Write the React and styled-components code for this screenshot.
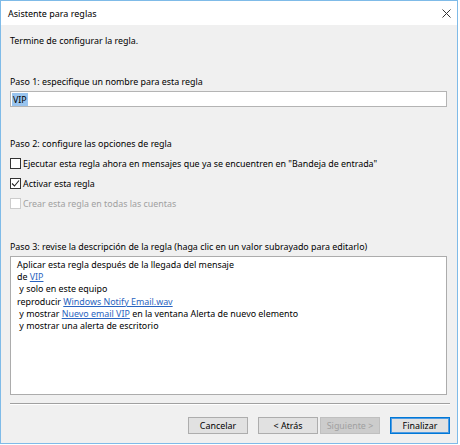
import React from "react";
import styled, { createGlobalStyle } from "styled-components";

const GlobalStyle = createGlobalStyle`
  body {
    margin: 0;
    background: #ffffff;
    font-family: "Noto Sans", "Open Sans", sans-serif;
    font-size: 8.9px;
    color: #000;
  }
`;

const Window = styled.div`
  box-sizing: border-box;
  width: 458px;
  height: 444px;
  border: 1px solid #7fbbe8;
  display: flex;
  flex-direction: column;
`;

const TitleBar = styled.div`
  height: 24px;
  background: #ffffff;
  display: flex;
  align-items: center;
  justify-content: space-between;
  padding: 0 6px 0 7px;
  font-size: 9px;
`;

const CloseButton = styled.button`
  border: 0;
  background: transparent;
  padding: 0;
  width: 10px;
  height: 10px;
  display: flex;
  align-items: center;
  justify-content: center;
  cursor: default;
`;

const Body = styled.div`
  flex: 1;
  background: #f0f0f0;
  padding: 0 7px 0 9px;
  display: flex;
  flex-direction: column;
`;

const Label = styled.div`
  line-height: 14px;
  margin-top: ${({ $top }) => $top || 0}px;
  white-space: nowrap;
`;

const NameInput = styled.div`
  box-sizing: border-box;
  margin: 2px 3px 0 0;
  height: 16px;
  background: #ffffff;
  border: 1px solid #b4b4b4;
  display: flex;
  align-items: center;
  padding-left: 1px;
`;

const Selected = styled.span`
  background: #99c4ee;
  line-height: 13px;
  padding: 0 1px;
`;

const Options = styled.div`
  margin-top: 2px;
  display: flex;
  flex-direction: column;
`;

const Option = styled.label`
  height: 20px;
  display: flex;
  align-items: center;
  gap: 2px;
  color: ${({ $disabled }) => ($disabled ? "#a0a0a0" : "#000")};
  white-space: nowrap;
`;

const Box = styled.span`
  box-sizing: border-box;
  width: 11px;
  height: 11px;
  background: #ffffff;
  border: 1px solid ${({ $disabled }) => ($disabled ? "#cccccc" : "#333333")};
  display: flex;
  align-items: center;
  justify-content: center;
`;

const Description = styled.div`
  box-sizing: border-box;
  margin: 2px 3px 0 0;
  height: 139px;
  background: #ffffff;
  border: 1px solid #acacac;
  padding: 2px 6px;
`;

const DescLine = styled.div`
  height: 12.2px;
  line-height: 12.2px;
  white-space: pre;
`;

const Link = styled.a`
  color: #2a64c0;
  text-decoration: underline;
  cursor: pointer;
`;

const Separator = styled.div`
  margin-top: 8px;
  height: 1px;
  background: #a0a0a0;
  border-bottom: 1px solid #ffffff;
`;

const ButtonRow = styled.div`
  margin-top: 12px;
  display: flex;
  justify-content: flex-end;
`;

const Button = styled.button`
  box-sizing: border-box;
  width: 60px;
  height: 17px;
  margin-left: ${({ $gap }) => $gap || 0}px;
  padding: 0;
  font: inherit;
  font-size: 8.9px;
  background: ${({ disabled }) => (disabled ? "#cccccc" : "#e1e1e1")};
  color: ${({ disabled }) => (disabled ? "#a0a0a0" : "#000")};
  border: 1px solid
    ${({ disabled, $primary }) =>
      $primary ? "#0078d7" : disabled ? "#bfbfbf" : "#adadad"};
  box-shadow: ${({ $primary }) => ($primary ? "inset 0 0 0 1px #4f9be2" : "none")};
`;

const Check = () => (
  <svg width="9" height="9" viewBox="0 0 9 9">
    <path d="M1 4.5 L3.5 7 L8 1.5" fill="none" stroke="#222" strokeWidth="1.1" />
  </svg>
);

const CloseIcon = () => (
  <svg width="9" height="9" viewBox="0 0 9 9">
    <path d="M0.5 0.5 L8.5 8.5 M8.5 0.5 L0.5 8.5" stroke="#333" strokeWidth="1" />
  </svg>
);

const App = () => {
  return (
    <>
      <GlobalStyle />
      <Window>
        <TitleBar>
          <span>Asistente para reglas</span>
          <CloseButton aria-label="Cerrar">
            <CloseIcon />
          </CloseButton>
        </TitleBar>

        <Body>
          <Label $top={9}>Termine de configurar la regla.</Label>

          <Label $top={27}>Paso 1: especifique un nombre para esta regla</Label>
          <NameInput>
            <Selected>VIP</Selected>
          </NameInput>

          <Label $top={30}>Paso 2: configure las opciones de regla</Label>
          <Options>
            <Option>
              <Box />
              Ejecutar esta regla ahora en mensajes que ya se encuentren en
              "Bandeja de entrada"
            </Option>
            <Option>
              <Box>
                <Check />
              </Box>
              Activar esta regla
            </Option>
            <Option $disabled>
              <Box $disabled />
              Crear esta regla en todas las cuentas
            </Option>
          </Options>

          <Label $top={27}>
            Paso 3: revise la descripción de la regla (haga clic en un valor
            subrayado para editarlo)
          </Label>
          <Description>
            <DescLine>Aplicar esta regla después de la llegada del mensaje</DescLine>
            <DescLine>
              de <Link>VIP</Link>
            </DescLine>
            <DescLine> y solo en este equipo</DescLine>
            <DescLine>
              reproducir <Link>Windows Notify Email.wav</Link>
            </DescLine>
            <DescLine>
              {" y mostrar "}
              <Link>Nuevo email VIP</Link>
              {" en la ventana Alerta de nuevo elemento"}
            </DescLine>
            <DescLine> y mostrar una alerta de escritorio</DescLine>
          </Description>

          <Separator />

          <ButtonRow>
            <Button>Cancelar</Button>
            <Button $gap={10}>&lt; Atrás</Button>
            <Button $gap={2} disabled>
              Siguiente &gt;
            </Button>
            <Button $gap={10} $primary>
              Finalizar
            </Button>
          </ButtonRow>
        </Body>
      </Window>
    </>
  );
};

export default App;
